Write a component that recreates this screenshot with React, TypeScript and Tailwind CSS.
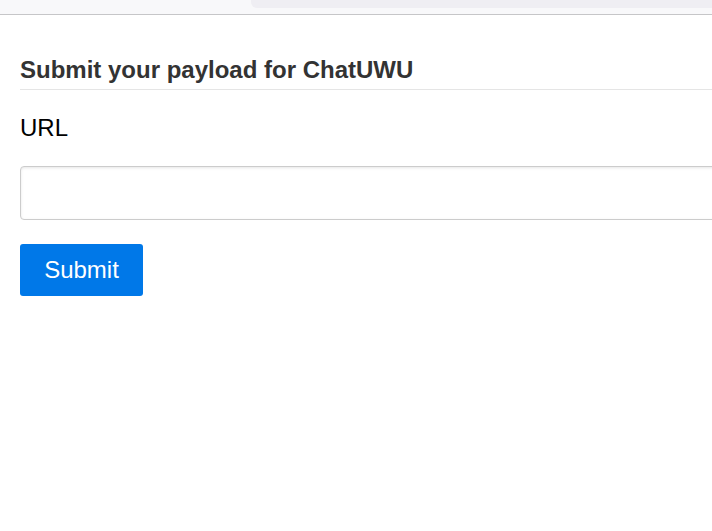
export default function App() {
  return (
    <div className="w-[712px] h-[531px] overflow-hidden bg-white font-['Liberation_Sans',Arial,sans-serif]">
      {/* browser strip */}
      <div className="h-[15px] bg-[#f8f8fa] border-b border-[#c6c6c8] flex">
        <div className="w-[251px]" />
        <div className="flex-1 h-[8px] bg-[#efeef3] rounded-bl-[6px]" />
      </div>

      <div className="w-[760px] pl-5 pt-[40px]">
        <h2 className="text-[24px] leading-[30px] font-bold text-[#333] pb-[4px] border-b border-[#e5e5e5]">
          Submit your payload for ChatUWU
        </h2>
        <form className="flex flex-col items-start" onSubmit={(e) => e.preventDefault()}>
          <label className="text-[24px] leading-[26px] text-black mt-[25px]">URL</label>
          <input
            type="text"
            className="mt-[25px] w-full h-[54px] border border-[#cccccc] rounded-[4px] shadow-[inset_0_1px_3px_rgba(0,0,0,0.1)] px-3 outline-none"
          />
          <button
            type="submit"
            className="mt-[24px] w-[123px] h-[52px] bg-[#0078e8] text-white text-[24px] rounded-[3px]"
          >
            Submit
          </button>
        </form>
      </div>
    </div>
  );
}
